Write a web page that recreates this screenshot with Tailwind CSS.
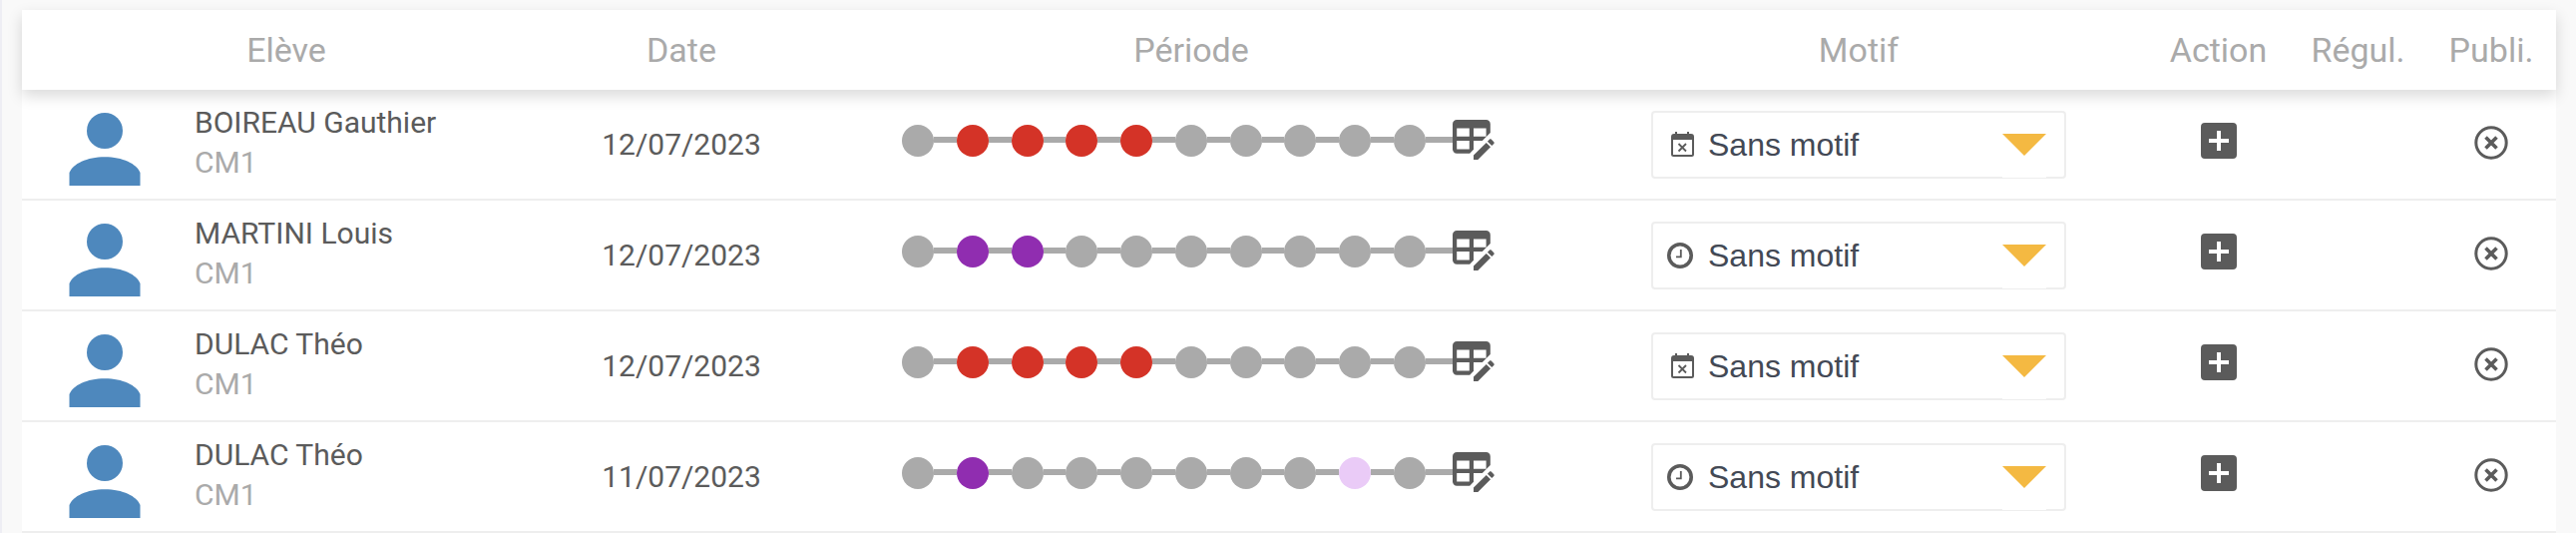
<!DOCTYPE html>
<html lang="fr">
<head>
<meta charset="utf-8">
<meta name="viewport" content="width=device-width, initial-scale=1">
<title>Absences et retards</title>
<script src="https://cdn.jsdelivr.net/npm/@tailwindcss/browser@4"></script>
</head>
<body class="min-h-screen border-l-2 border-[#eeeef4] bg-[#f9f9f9] pt-[10px] pr-5 pl-5 font-[Roboto,sans-serif] text-[#5b5b5b]">

<svg class="hidden" aria-hidden="true">
  <symbol id="user" viewBox="0 0 72 74"><circle cx="36" cy="19" r="18"/><path d="M.5 74V61C4 52 18 45.200 36 45.200S68 52 71.500 61V74Z"/></symbol>
  <symbol id="table-edit" viewBox="2 2 20 19"><path d="M21.700 13.350l-1 1-2.050-2.050 1-1c.210-.220.560-.220.770 0l1.280 1.280c.220.210.220.560 0 .770M12 18.940l6.070-6.060 2.050 2.050L14.060 21H12v-2.060M4 2h14a2 2 0 0 1 2 2v4.170L16.170 12H12v4.170L10.170 18H4a2 2 0 0 1-2-2V4a2 2 0 0 1 2-2m0 4v4h6V6H4m8 0v4h6V6h-6m-8 6v4h6v-4H4z"/></symbol>
  <symbol id="calendar" viewBox="0 0 27 27"><path fill-rule="evenodd" d="M8 0h2v2h10V0h2v2h2a3 3 0 0 1 3 3v17.500a2.500 2.500 0 0 1-2.500 2.500h-18A2.500 2.500 0 0 1 4 22.500V5a3 3 0 0 1 3-3h1zM6 8v15h19V8z"/><path d="M11.500 12l7.500 7.500m0-7.500l-7.500 7.500" fill="none" stroke="currentColor" stroke-width="1.800"/></symbol>
  <symbol id="clock" viewBox="0 0 27 27"><circle cx="13" cy="13" r="11.200" fill="none" stroke="currentColor" stroke-width="3.600"/><path d="M13.800 7v7.400H9" fill="none" stroke="currentColor" stroke-width="1.800"/></symbol>
  <symbol id="plus" viewBox="0 0 36 36"><path fill-rule="evenodd" d="M4 0h28a4 4 0 0 1 4 4v28a4 4 0 0 1-4 4H4a4 4 0 0 1-4-4V4a4 4 0 0 1 4-4zm12 8v8H8v4h8v8h4v-8h8v-4h-8V8z"/></symbol>
  <symbol id="cross" viewBox="0 0 34 34"><circle cx="17" cy="17" r="15.200" fill="none" stroke="currentColor" stroke-width="3"/><path d="M11.500 11.500l11 11m0-11l-11 11" fill="none" stroke="currentColor" stroke-width="3.600"/></symbol>
  <symbol id="arrow" viewBox="0 0 44 22"><path d="M0 0h44L22 22z"/></symbol>
</svg>

<table class="w-full table-fixed border-separate border-spacing-0 bg-white">
  <colgroup>
    <col class="w-[530px]"><col class="w-[262px]"><col><col class="w-[578px]"><col class="w-[143px]"><col class="w-[137px]"><col class="w-[130px]">
  </colgroup>
  <thead>
    <tr class="h-20 text-[34px] leading-10 text-[#aaaaaa] shadow-[0_6px_14px_rgba(0,0,0,0.15)]">
      <th scope="col" class="bg-white p-0 font-normal">Elève</th>
      <th scope="col" class="bg-white p-0 font-normal">Date</th>
      <th scope="col" class="bg-white p-0 font-normal">Période</th>
      <th scope="col" class="bg-white p-0 font-normal">Motif</th>
      <th scope="col" class="bg-white p-0 font-normal">Action</th>
      <th scope="col" class="bg-white p-0 font-normal">Régul.</th>
      <th scope="col" class="bg-white p-0 font-normal">Publi.</th>
    </tr>
  </thead>
  <tbody class="text-[30px] leading-10 [&_td]:border-b-2 [&_td]:border-[#eeeeee] [&_td]:p-0 [&_th]:border-b-2 [&_th]:border-[#eeeeee] [&_th]:p-0">
    <tr class="h-[111px]">
      <th scope="row" class="text-left font-normal">
        <div class="flex items-center gap-[54px] pl-[47px]">
          <svg class="mt-2 h-[74px] w-[72px] shrink-0 fill-[#4e88bd]" aria-hidden="true"><use href="#user"/></svg>
          <div class="pb-1"><div>BOIREAU Gauthier</div><div class="text-[#aaaaaa]">CM1</div></div>
        </div>
      </th>
      <td class="text-center">12/07/2023</td>
      <td>
        <div class="flex items-center justify-center pb-2 pl-[14px]">
          <div class="flex w-[525px] items-center">
            <i class="size-8 shrink-0 rounded-full bg-[#aaaaaa]"></i><i class="mb-0.5 h-1.5 flex-1 bg-[#aaaaaa]"></i>
            <i class="size-8 shrink-0 rounded-full bg-[#d43327]"></i><i class="mb-0.5 h-1.5 flex-1 bg-[#aaaaaa]"></i>
            <i class="size-8 shrink-0 rounded-full bg-[#d43327]"></i><i class="mb-0.5 h-1.5 flex-1 bg-[#aaaaaa]"></i>
            <i class="size-8 shrink-0 rounded-full bg-[#d43327]"></i><i class="mb-0.5 h-1.5 flex-1 bg-[#aaaaaa]"></i>
            <i class="size-8 shrink-0 rounded-full bg-[#d43327]"></i><i class="mb-0.5 h-1.5 flex-1 bg-[#aaaaaa]"></i>
            <i class="size-8 shrink-0 rounded-full bg-[#aaaaaa]"></i><i class="mb-0.5 h-1.5 flex-1 bg-[#aaaaaa]"></i>
            <i class="size-8 shrink-0 rounded-full bg-[#aaaaaa]"></i><i class="mb-0.5 h-1.5 flex-1 bg-[#aaaaaa]"></i>
            <i class="size-8 shrink-0 rounded-full bg-[#aaaaaa]"></i><i class="mb-0.5 h-1.5 flex-1 bg-[#aaaaaa]"></i>
            <i class="size-8 shrink-0 rounded-full bg-[#aaaaaa]"></i><i class="mb-0.5 h-1.5 flex-1 bg-[#aaaaaa]"></i>
            <i class="size-8 shrink-0 rounded-full bg-[#aaaaaa]"></i>
          </div>
          <i class="mb-0.5 h-1.5 w-[27px] bg-[#aaaaaa]"></i>
          <button type="button" aria-label="Modifier les périodes" class="mb-0.5"><svg class="block h-10 w-[42px] fill-current"><use href="#table-edit"/></svg></button>
        </div>
      </td>
      <td>
        <div class="relative mx-auto h-[68px] w-[416px]">
          <select aria-label="Motif" class="block size-full appearance-none rounded border-2 border-[#eeeeee] bg-white pr-16 pl-[55px] font-['Liberation_Sans',Arial,sans-serif] text-[32px] text-[#434955]"><option>Sans motif</option></select>
          <svg class="pointer-events-none absolute top-[21px] left-4 size-[27px] fill-current" aria-hidden="true"><use href="#calendar"/></svg>
          <span class="pointer-events-none absolute top-0.5 right-5 bottom-px w-11 bg-white pt-[21px]" aria-hidden="true"><svg class="block h-[22px] w-11 fill-[#f4b942]"><use href="#arrow"/></svg></span>
        </div>
      </td>
      <td><button type="button" aria-label="Ajouter" class="mx-auto mb-2 block"><svg class="block size-9 fill-current"><use href="#plus"/></svg></button></td>
      <td></td>
      <td><button type="button" aria-label="Publication" class="mx-auto mb-1 block"><svg class="block size-[34px]"><use href="#cross"/></svg></button></td>
    </tr>
    <tr class="h-[111px]">
      <th scope="row" class="text-left font-normal">
        <div class="flex items-center gap-[54px] pl-[47px]">
          <svg class="mt-2 h-[74px] w-[72px] shrink-0 fill-[#4e88bd]" aria-hidden="true"><use href="#user"/></svg>
          <div class="pb-1"><div>MARTINI Louis</div><div class="text-[#aaaaaa]">CM1</div></div>
        </div>
      </th>
      <td class="text-center">12/07/2023</td>
      <td>
        <div class="flex items-center justify-center pb-2 pl-[14px]">
          <div class="flex w-[525px] items-center">
            <i class="size-8 shrink-0 rounded-full bg-[#aaaaaa]"></i><i class="mb-0.5 h-1.5 flex-1 bg-[#aaaaaa]"></i>
            <i class="size-8 shrink-0 rounded-full bg-[#902db0]"></i><i class="mb-0.5 h-1.5 flex-1 bg-[#aaaaaa]"></i>
            <i class="size-8 shrink-0 rounded-full bg-[#902db0]"></i><i class="mb-0.5 h-1.5 flex-1 bg-[#aaaaaa]"></i>
            <i class="size-8 shrink-0 rounded-full bg-[#aaaaaa]"></i><i class="mb-0.5 h-1.5 flex-1 bg-[#aaaaaa]"></i>
            <i class="size-8 shrink-0 rounded-full bg-[#aaaaaa]"></i><i class="mb-0.5 h-1.5 flex-1 bg-[#aaaaaa]"></i>
            <i class="size-8 shrink-0 rounded-full bg-[#aaaaaa]"></i><i class="mb-0.5 h-1.5 flex-1 bg-[#aaaaaa]"></i>
            <i class="size-8 shrink-0 rounded-full bg-[#aaaaaa]"></i><i class="mb-0.5 h-1.5 flex-1 bg-[#aaaaaa]"></i>
            <i class="size-8 shrink-0 rounded-full bg-[#aaaaaa]"></i><i class="mb-0.5 h-1.5 flex-1 bg-[#aaaaaa]"></i>
            <i class="size-8 shrink-0 rounded-full bg-[#aaaaaa]"></i><i class="mb-0.5 h-1.5 flex-1 bg-[#aaaaaa]"></i>
            <i class="size-8 shrink-0 rounded-full bg-[#aaaaaa]"></i>
          </div>
          <i class="mb-0.5 h-1.5 w-[27px] bg-[#aaaaaa]"></i>
          <button type="button" aria-label="Modifier les périodes" class="mb-0.5"><svg class="block h-10 w-[42px] fill-current"><use href="#table-edit"/></svg></button>
        </div>
      </td>
      <td>
        <div class="relative mx-auto h-[68px] w-[416px]">
          <select aria-label="Motif" class="block size-full appearance-none rounded border-2 border-[#eeeeee] bg-white pr-16 pl-[55px] font-['Liberation_Sans',Arial,sans-serif] text-[32px] text-[#434955]"><option>Sans motif</option></select>
          <svg class="pointer-events-none absolute top-[21px] left-4 size-[27px] fill-current" aria-hidden="true"><use href="#clock"/></svg>
          <span class="pointer-events-none absolute top-0.5 right-5 bottom-px w-11 bg-white pt-[21px]" aria-hidden="true"><svg class="block h-[22px] w-11 fill-[#f4b942]"><use href="#arrow"/></svg></span>
        </div>
      </td>
      <td><button type="button" aria-label="Ajouter" class="mx-auto mb-2 block"><svg class="block size-9 fill-current"><use href="#plus"/></svg></button></td>
      <td></td>
      <td><button type="button" aria-label="Publication" class="mx-auto mb-1 block"><svg class="block size-[34px]"><use href="#cross"/></svg></button></td>
    </tr>
    <tr class="h-[111px]">
      <th scope="row" class="text-left font-normal">
        <div class="flex items-center gap-[54px] pl-[47px]">
          <svg class="mt-2 h-[74px] w-[72px] shrink-0 fill-[#4e88bd]" aria-hidden="true"><use href="#user"/></svg>
          <div class="pb-1"><div>DULAC Théo</div><div class="text-[#aaaaaa]">CM1</div></div>
        </div>
      </th>
      <td class="text-center">12/07/2023</td>
      <td>
        <div class="flex items-center justify-center pb-2 pl-[14px]">
          <div class="flex w-[525px] items-center">
            <i class="size-8 shrink-0 rounded-full bg-[#aaaaaa]"></i><i class="mb-0.5 h-1.5 flex-1 bg-[#aaaaaa]"></i>
            <i class="size-8 shrink-0 rounded-full bg-[#d43327]"></i><i class="mb-0.5 h-1.5 flex-1 bg-[#aaaaaa]"></i>
            <i class="size-8 shrink-0 rounded-full bg-[#d43327]"></i><i class="mb-0.5 h-1.5 flex-1 bg-[#aaaaaa]"></i>
            <i class="size-8 shrink-0 rounded-full bg-[#d43327]"></i><i class="mb-0.5 h-1.5 flex-1 bg-[#aaaaaa]"></i>
            <i class="size-8 shrink-0 rounded-full bg-[#d43327]"></i><i class="mb-0.5 h-1.5 flex-1 bg-[#aaaaaa]"></i>
            <i class="size-8 shrink-0 rounded-full bg-[#aaaaaa]"></i><i class="mb-0.5 h-1.5 flex-1 bg-[#aaaaaa]"></i>
            <i class="size-8 shrink-0 rounded-full bg-[#aaaaaa]"></i><i class="mb-0.5 h-1.5 flex-1 bg-[#aaaaaa]"></i>
            <i class="size-8 shrink-0 rounded-full bg-[#aaaaaa]"></i><i class="mb-0.5 h-1.5 flex-1 bg-[#aaaaaa]"></i>
            <i class="size-8 shrink-0 rounded-full bg-[#aaaaaa]"></i><i class="mb-0.5 h-1.5 flex-1 bg-[#aaaaaa]"></i>
            <i class="size-8 shrink-0 rounded-full bg-[#aaaaaa]"></i>
          </div>
          <i class="mb-0.5 h-1.5 w-[27px] bg-[#aaaaaa]"></i>
          <button type="button" aria-label="Modifier les périodes" class="mb-0.5"><svg class="block h-10 w-[42px] fill-current"><use href="#table-edit"/></svg></button>
        </div>
      </td>
      <td>
        <div class="relative mx-auto h-[68px] w-[416px]">
          <select aria-label="Motif" class="block size-full appearance-none rounded border-2 border-[#eeeeee] bg-white pr-16 pl-[55px] font-['Liberation_Sans',Arial,sans-serif] text-[32px] text-[#434955]"><option>Sans motif</option></select>
          <svg class="pointer-events-none absolute top-[21px] left-4 size-[27px] fill-current" aria-hidden="true"><use href="#calendar"/></svg>
          <span class="pointer-events-none absolute top-0.5 right-5 bottom-px w-11 bg-white pt-[21px]" aria-hidden="true"><svg class="block h-[22px] w-11 fill-[#f4b942]"><use href="#arrow"/></svg></span>
        </div>
      </td>
      <td><button type="button" aria-label="Ajouter" class="mx-auto mb-2 block"><svg class="block size-9 fill-current"><use href="#plus"/></svg></button></td>
      <td></td>
      <td><button type="button" aria-label="Publication" class="mx-auto mb-1 block"><svg class="block size-[34px]"><use href="#cross"/></svg></button></td>
    </tr>
    <tr class="h-[111px]">
      <th scope="row" class="text-left font-normal">
        <div class="flex items-center gap-[54px] pl-[47px]">
          <svg class="mt-2 h-[74px] w-[72px] shrink-0 fill-[#4e88bd]" aria-hidden="true"><use href="#user"/></svg>
          <div class="pb-1"><div>DULAC Théo</div><div class="text-[#aaaaaa]">CM1</div></div>
        </div>
      </th>
      <td class="text-center">11/07/2023</td>
      <td>
        <div class="flex items-center justify-center pb-2 pl-[14px]">
          <div class="flex w-[525px] items-center">
            <i class="size-8 shrink-0 rounded-full bg-[#aaaaaa]"></i><i class="mb-0.5 h-1.5 flex-1 bg-[#aaaaaa]"></i>
            <i class="size-8 shrink-0 rounded-full bg-[#902db0]"></i><i class="mb-0.5 h-1.5 flex-1 bg-[#aaaaaa]"></i>
            <i class="size-8 shrink-0 rounded-full bg-[#aaaaaa]"></i><i class="mb-0.5 h-1.5 flex-1 bg-[#aaaaaa]"></i>
            <i class="size-8 shrink-0 rounded-full bg-[#aaaaaa]"></i><i class="mb-0.5 h-1.5 flex-1 bg-[#aaaaaa]"></i>
            <i class="size-8 shrink-0 rounded-full bg-[#aaaaaa]"></i><i class="mb-0.5 h-1.5 flex-1 bg-[#aaaaaa]"></i>
            <i class="size-8 shrink-0 rounded-full bg-[#aaaaaa]"></i><i class="mb-0.5 h-1.5 flex-1 bg-[#aaaaaa]"></i>
            <i class="size-8 shrink-0 rounded-full bg-[#aaaaaa]"></i><i class="mb-0.5 h-1.5 flex-1 bg-[#aaaaaa]"></i>
            <i class="size-8 shrink-0 rounded-full bg-[#aaaaaa]"></i><i class="mb-0.5 h-1.5 flex-1 bg-[#aaaaaa]"></i>
            <i class="size-8 shrink-0 rounded-full bg-[#eacbf7]"></i><i class="mb-0.5 h-1.5 flex-1 bg-[#aaaaaa]"></i>
            <i class="size-8 shrink-0 rounded-full bg-[#aaaaaa]"></i>
          </div>
          <i class="mb-0.5 h-1.5 w-[27px] bg-[#aaaaaa]"></i>
          <button type="button" aria-label="Modifier les périodes" class="mb-0.5"><svg class="block h-10 w-[42px] fill-current"><use href="#table-edit"/></svg></button>
        </div>
      </td>
      <td>
        <div class="relative mx-auto h-[68px] w-[416px]">
          <select aria-label="Motif" class="block size-full appearance-none rounded border-2 border-[#eeeeee] bg-white pr-16 pl-[55px] font-['Liberation_Sans',Arial,sans-serif] text-[32px] text-[#434955]"><option>Sans motif</option></select>
          <svg class="pointer-events-none absolute top-[21px] left-4 size-[27px] fill-current" aria-hidden="true"><use href="#clock"/></svg>
          <span class="pointer-events-none absolute top-0.5 right-5 bottom-px w-11 bg-white pt-[21px]" aria-hidden="true"><svg class="block h-[22px] w-11 fill-[#f4b942]"><use href="#arrow"/></svg></span>
        </div>
      </td>
      <td><button type="button" aria-label="Ajouter" class="mx-auto mb-2 block"><svg class="block size-9 fill-current"><use href="#plus"/></svg></button></td>
      <td></td>
      <td><button type="button" aria-label="Publication" class="mx-auto mb-1 block"><svg class="block size-[34px]"><use href="#cross"/></svg></button></td>
    </tr>
  </tbody>
</table>
</body>
</html>
